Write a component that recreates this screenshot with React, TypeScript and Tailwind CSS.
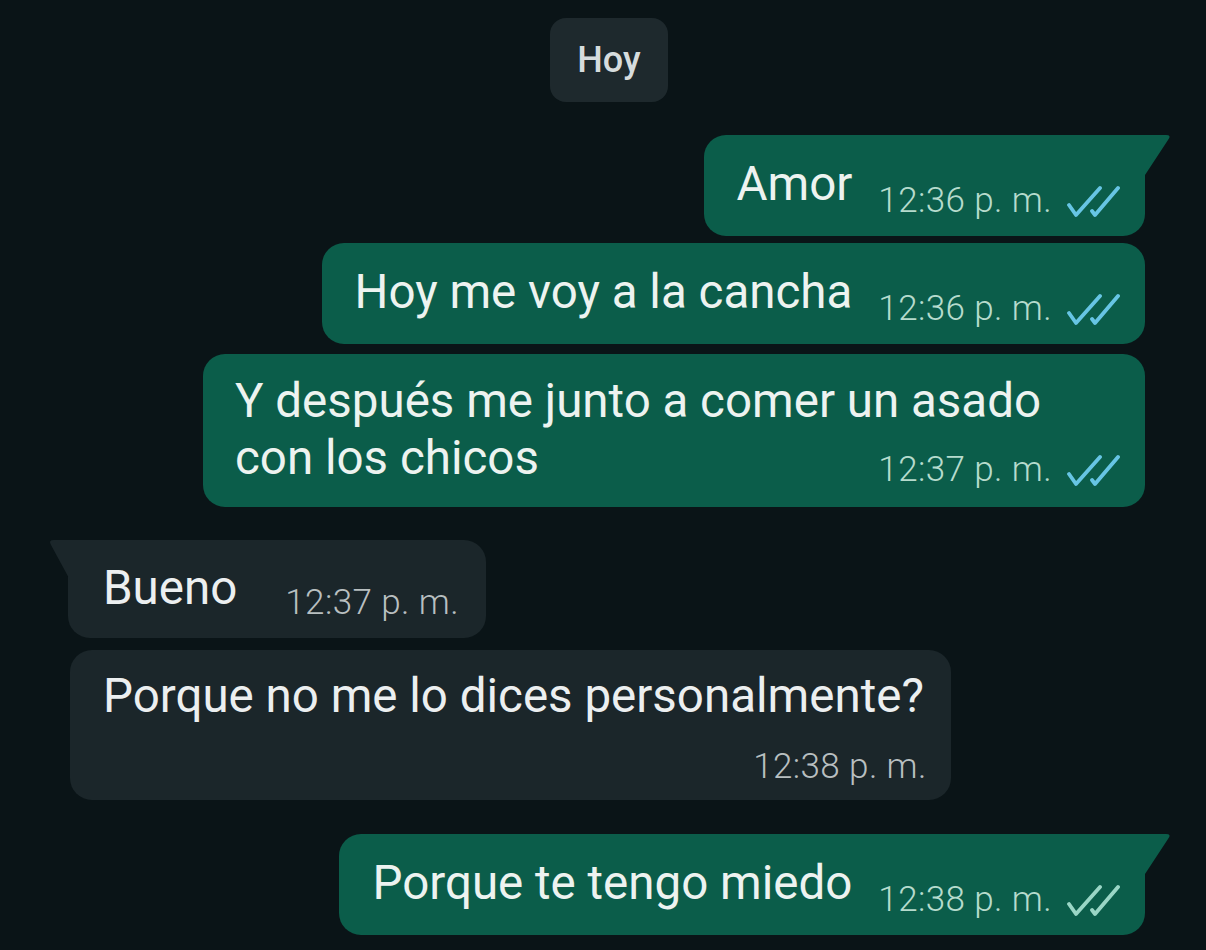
import React from "react";

const Ticks = ({ color }: { color: string }) => (
  <svg width="54" height="32" viewBox="0 0 54 32" fill="none" className="ml-[14px] mb-[4px] shrink-0">
    <path d="M3 20 L10 30 L34 3" stroke={color} strokeWidth="3.8" strokeLinecap="round" strokeLinejoin="round" />
    <path d="M26 26 L29 30 L52 3" stroke={color} strokeWidth="3.8" strokeLinecap="round" strokeLinejoin="round" />
  </svg>
);

const OutTail = () => (
  <svg width="32" height="40" viewBox="0 0 32 40" className="absolute top-0 -right-[28px]">
    <path d="M0 0 H25 Q31 0 27 5 L4 40 H0 Z" fill="#0b5d4a" />
  </svg>
);

const InTail = () => (
  <svg width="24" height="40" viewBox="0 0 24 40" className="absolute top-0 -left-[20px]">
    <path d="M24 0 H6 Q0 0 3 5 L22 40 H24 Z" fill="#1b262a" />
  </svg>
);

const OutTime = ({ time, tick = "#67c5e4" }: { time: string; tick?: string }) => (
  <div className="flex items-end shrink-0 text-[35px] leading-[40px] tracking-[0.4px] font-light text-[#b6dbcd]">
    <span>{time}</span>
    <Ticks color={tick} />
  </div>
);

const Outgoing = ({
  text,
  time,
  tail,
  tick,
}: {
  text: string;
  time: string;
  tail?: boolean;
  tick?: string;
}) => (
  <div
    className={`relative self-end mr-[61px] flex items-end bg-[#0b5d4a] rounded-[22px] pl-[33px] pr-[25px] pt-[21px] pb-[15px] ${tail ? "rounded-tr-none" : ""}`}
  >
    {tail && <OutTail />}
    <span className="text-[47.5px] leading-[57px] text-[#edf3f0] pb-[8px] whitespace-nowrap">{text}</span>
    <div className="ml-[26px]">
      <OutTime time={time} tick={tick} />
    </div>
  </div>
);

export default function App() {
  return (
    <div
      className="w-[1206px] h-[950px] overflow-hidden bg-[#0a1417] flex flex-col"
      style={{ fontFamily: "Roboto, 'Noto Sans', sans-serif" }}
    >
      <div className="self-center mt-[18px] ml-[12px] w-[118px] h-[84px] rounded-[16px] bg-[#1e292d] flex items-center justify-center text-[36px] font-medium text-[#d6dcdd]">
        Hoy
      </div>

      <div className="mt-[33px] flex flex-col">
        <Outgoing text="Amor" time="12:36 p. m." tail />
      </div>

      <div className="mt-[7px] flex flex-col">
        <Outgoing text="Hoy me voy a la cancha" time="12:36 p. m." />
      </div>

      <div className="mt-[10px] self-end mr-[61px] w-[942px] bg-[#0b5d4a] rounded-[22px] pl-[32px] pr-[25px] pt-[19px] pb-[17px] flex flex-col">
        <span className="text-[47.5px] leading-[57px] text-[#edf3f0]">
          Y después me junto a comer un asado
          <br />
          con los chicos
        </span>
        <div className="self-end -mt-[37px]">
          <OutTime time="12:37 p. m." />
        </div>
      </div>

      <div className="mt-[33px] ml-[68px] self-start relative flex items-end bg-[#1b262a] rounded-[22px] rounded-tl-none pl-[35px] pr-[27px] pt-[20px] pb-[15px]">
        <InTail />
        <span className="text-[47.5px] leading-[57px] text-[#eceff0] pb-[6px]">Bueno</span>
        <span className="ml-[48px] text-[35px] leading-[40px] tracking-[0.4px] font-light text-[#b8bfc0]">12:37 p. m.</span>
      </div>

      <div className="mt-[12px] ml-[70px] self-start flex flex-col bg-[#1b262a] rounded-[22px] pl-[33px] pr-[27px] pt-[18px] pb-[13px]">
        <span className="text-[47.5px] leading-[57px] text-[#eceff0]">Porque no me lo dices personalmente?</span>
        <span className="self-end mt-[22px] -mr-[3px] text-[35px] leading-[40px] tracking-[0.4px] font-light text-[#b8bfc0]">12:38 p. m.</span>
      </div>

      <div className="mt-[34px] flex flex-col">
        <Outgoing text="Porque te tengo miedo" time="12:38 p. m." tail tick="#9ad6c6" />
      </div>
    </div>
  );
}
